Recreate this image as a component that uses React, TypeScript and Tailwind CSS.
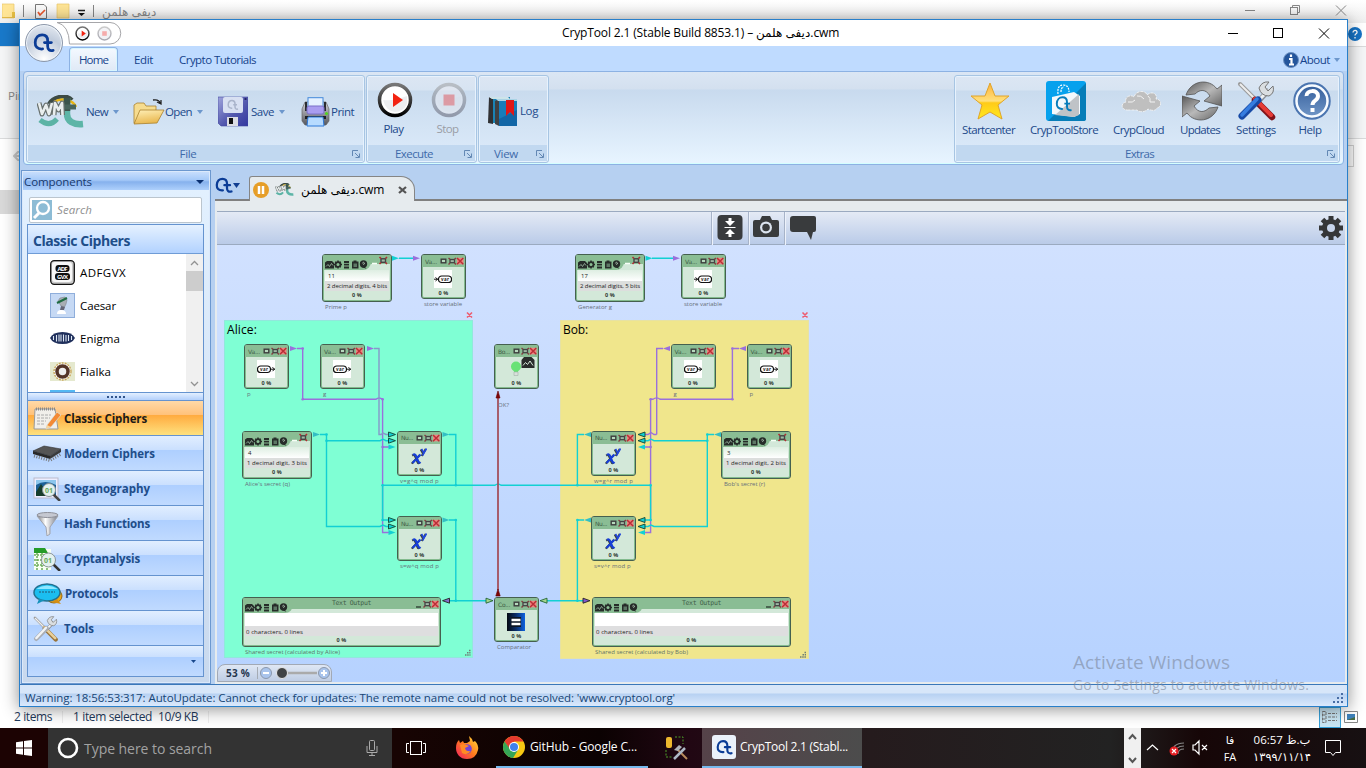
import React, { useLayoutEffect, useRef, useState } from "react";

/* Text that spreads or tightens its letters to fill a given width. */
function Fit({ w, className = "", children }: { w: number; className?: string; children: string }) {
  const ref = useRef<HTMLSpanElement>(null);
  const [ls, setLs] = useState(0);
  useLayoutEffect(() => {
    if (ref.current) {
      const r = document.createRange();
      r.selectNodeContents(ref.current);
      const natural = r.getBoundingClientRect().width;
      setLs((w - natural) / children.length);
    }
  }, []);
  return (
    <span ref={ref} className={`block shrink-0 whitespace-nowrap ${className}`} style={{ width: w, letterSpacing: ls }}>
      {children}
    </span>
  );
}

const CtPath = () => (
  <>
    <path d="M10.5 18.5C4.5 19 2.2 15.500 2.400 11.500C2.600 6 6 3 10 3C14 3 16 5.500 16 9.500V15.500C16 19 18 21 22 20" fill="none" />
    <path d="M12.500 11.500H20" fill="none" />
  </>
);
const Ct = ({ className = "size-6", color = "#0b3c96" }: { className?: string; color?: string }) => (
  <svg viewBox="0 0 24 24" className={className} stroke={color} strokeWidth="3" strokeLinecap="round"><CtPath /></svg>
);

const Caret = ({ className = "" }: { className?: string }) => (
  <svg viewBox="0 0 6 4" className={`h-1 w-1.5 shrink-0 ${className}`}><path d="M0 0h6l-3 4z" fill="#6d97cc" /></svg>
);

const WmLogo = ({ className }: { className: string }) => (
  <svg viewBox="0 0 47 33" className={className}>
    <path d="M12 9C16 1 30-1 35 5" stroke="#3c4a44" strokeWidth="4" fill="none" />
    <path d="M17 7C25 2 36 5 39 12" stroke="#e9b616" strokeWidth="2.500" fill="none" />
    <path d="M20 24C14 31 8 29 3 25" stroke="#5cb3a5" strokeWidth="5" fill="none" />
    <path d="M30 3V19C30 26 36 30 46 29" stroke="#5db5a7" strokeWidth="6.500" fill="none" />
    <path d="M30 3V16" stroke="#3b544c" strokeWidth="6.500" />
    <path d="M24 12H39" stroke="#48655d" strokeWidth="5" />
    <path d="M2 8L5 19L9 10L12 19L15 8M17 20L18 8L21.500 15L25 8L25.500 20" stroke="#69716f" strokeWidth="5" fill="none" strokeLinejoin="round" />
    <path d="M2 8L5 19L9 10L12 19L15 8M17 20L18 8L21.500 15L25 8L25.500 20" stroke="#e9eeee" strokeWidth="2.600" fill="none" strokeLinejoin="round" />
  </svg>
);

const FolderIcon = () => (
  <svg viewBox="0 0 32 28" className="h-7 w-8">
    <defs><linearGradient id="fo" x2="0.300" y2="1"><stop stopColor="#fff0b8" /><stop offset="1" stopColor="#e9b850" /></linearGradient></defs>
    <path d="M1 25V7L4 5H11L13 8H23V12L7 25Z" fill="#f6dc8f" stroke="#a9822e" strokeWidth=".8" />
    <path d="M7 12H31L24 25L1 26Z" fill="url(#fo)" stroke="#a9822e" strokeWidth=".8" />
    <path d="M20 2Q26 1 27 5M24 4L28 6L28 2" fill="none" stroke="#222" strokeWidth="1.300" />
  </svg>
);
const SaveIcon = () => (
  <svg viewBox="0 0 30 31" className="h-[31px] w-[30px]">
    <defs><linearGradient id="sv" x2="1" y2="1"><stop stopColor="#9fa4dc" /><stop offset=".55" stopColor="#5459ae" /><stop offset="1" stopColor="#3338a0" /></linearGradient></defs>
    <path d="M0 1H30V30H3L0 27Z" fill="url(#sv)" stroke="#4248a0" strokeWidth=".6" />
    <rect x="5" y="1" width="20" height="16" rx="2" fill="#d8e0f2" />
    <g transform="translate(9 3) scale(.5)" stroke="#aab4cb" strokeWidth="3"><CtPath /></g>
    <rect x="9" y="21" width="11" height="9" fill="#dcdde4" /><rect x="11" y="22" width="4" height="6" fill="#111" />
    <rect x="26.500" y="2" width="2" height="2" fill="#20246b" />
  </svg>
);
const PrintIcon = () => (
  <svg viewBox="0 0 29 30" className="h-[30px] w-[29px]">
    <defs><linearGradient id="pr" x2="0" y2="1"><stop stopColor="#d4d5da" /><stop offset="1" stopColor="#55565c" /></linearGradient></defs>
    <path d="M4 5H25L28 12V24L25 28H4L1 24V12Z" fill="url(#pr)" stroke="#666" strokeWidth=".7" />
    <path d="M5 5V14M24 5V14" stroke="#2b2c31" strokeWidth="2" />
    <rect x="7" y=".7" width="15" height="14" fill="#e4f1ff" stroke="#4388da" />
    <rect x="6" y="9" width="17" height="8" rx="2" fill="#a99df0" stroke="#7a70c8" />
    <rect x="4" y="19" width="21" height="3" fill="#1f2126" />
    <path d="M7 20H22L23 29H6Z" fill="#b7dbff" stroke="#2d78d8" />
    <circle cx="25.500" cy="16.500" r="1.500" fill="#51d51f" />
  </svg>
);
const RoundButton = ({ stop = false, small = false }: { stop?: boolean; small?: boolean }) => (
  <svg viewBox="0 0 36 36" className={small ? "size-[15px]" : "size-9"} opacity={stop ? 0.5 : 1}>
    <defs><linearGradient id={stop ? "rbs" : "rbp"} x2="0" y2="1"><stop stopColor={stop ? "#999" : "#777"} /><stop offset="1" stopColor={stop ? "#556" : "#000"} /></linearGradient></defs>
    <circle cx="18" cy="18" r="15.500" fill={stop ? "#e9e9ef" : "#fff"} stroke={stop ? "url(#rbs)" : "url(#rbp)"} strokeWidth="3.500" />
    <path d="M6 18Q18 19 30 14V22Q26 30 18 30Q9 29 6 18" fill="#e1e3e8" opacity=".6" />
    {stop ? <rect x="12.500" y="12.500" width="11" height="11" fill="#ec5a5a" /> : <path d="M16 11V25L26 18Z" fill="#f32311" />}
  </svg>
);
const BooksIcon = () => (
  <svg viewBox="0 0 30 32" className="h-8 w-[30px] shrink-0">
    <path d="M1 2L5 4V29L0 28Z" fill="#303134" /><path d="M5 3L22 2V28H5Z" fill="#1a83b4" />
    <path d="M1 2H20L22 4H4Z" fill="#cde4e9" />
    <path d="M7 6L11 4V31L7 29Z" fill="#3f4144" /><path d="M11 5H29V31H11Z" fill="#1266a6" /><path d="M11 5H29V15L11 24Z" fill="#1a8cc8" opacity=".6" />
    <path d="M8 4H29V6H10Z" fill="#a9d3e5" /><path d="M18 5H26V21L22 17L18 21Z" fill="#df1717" />
  </svg>
);
const StarIcon = () => (
  <svg viewBox="0 0 40 40" className="size-10">
    <defs><linearGradient id="st" x2="0" y2="1"><stop stopColor="#ffb338" /><stop offset=".5" stopColor="#ffe07b" /><stop offset=".55" stopColor="#ffcb18" /><stop offset="1" stopColor="#ffe91e" /></linearGradient></defs>
    <path d="M20 2L25 15H39L28 24L32 38L20 31L8 38L12 24L1 15H15Z" fill="url(#st)" stroke="#dfa52c" strokeLinejoin="round" />
  </svg>
);
const StoreIcon = () => (
  <svg viewBox="0 0 40 40" className="size-10">
    <rect width="40" height="40" rx="3" fill="#06a1ed" /><path d="M40 2V38Q40 40 37 40H2Z" fill="#067db8" />
    <path d="M6 16L28 11L34 15V33L28 36L6 33Z" fill="#f3f8fc" /><path d="M33 13V34L28 36L9 34Z" fill="#bfc3c7" />
    <path d="M12 13Q11 4 17 4Q23 4 23 11M15 11Q15 6 18 6" fill="none" stroke="#fff" strokeWidth="1.200" strokeDasharray="2 1" />
    <g transform="translate(9 14) scale(.75)" stroke="#087cba" strokeWidth="2.600"><CtPath /></g>
  </svg>
);
const CloudIcon = () => (
  <svg viewBox="0 0 40 40" className="size-10">
    <path d="M8 29C0 30-1 22 5 21C3 16 10 13 13 16C15 9 25 9 26 14C32 9 37 14 35 18C41 18 41 26 36 27C34 31 29 29 27 28C23 32 18 31 16 29Z" fill="#bfbfbf" stroke="#f7f7f7" strokeWidth=".8" strokeDasharray="3 1" />
    <path d="M7 21Q12 22 14 19M16 15Q20 14 23 18M27 15Q30 17 29 21H34" stroke="#f3f3f3" fill="none" />
  </svg>
);
const UpdateIcon = () => (
  <svg viewBox="0 0 40 40" className="size-10">
    <defs><linearGradient id="up" x2="1" y2="1"><stop stopColor="#585858" /><stop offset=".5" stopColor="#b9b9b9" /><stop offset="1" stopColor="#666" /></linearGradient></defs>
    <g fill="url(#up)" stroke="#545454" strokeWidth=".8">
      <path d="M4 14C9 -1 27-3 35 8L40 4V25L22 20L28 15C24 8 18 8 13 13Z" />
      <path d="M36 26C31 41 13 43 5 32L0 36V15L18 20L12 25C16 32 22 32 27 27Z" />
    </g>
  </svg>
);
const ToolsPic = ({ color = true, className = "size-10" }: { color?: boolean; className?: string }) => (
  <svg viewBox="0 0 40 40" className={className}>
    <path d="M3 3L16 16" stroke="#999" strokeWidth="4" strokeLinecap="round" /><path d="M3 3L18 18" stroke="#eee" strokeWidth="2" />
    <path d="M20 22L32 9" stroke="#8b8f95" strokeWidth="5" /><path d="M21 20L32 9" stroke="#eef1f3" strokeWidth="3" />
    <path d="M22 7Q25 0 32 1L28 6L31 10L36 5Q38 12 32 15Q24 15 22 7" fill="#dadee1" stroke="#777" />
    <path d="M18 19L35 36" stroke={color ? "#81131a" : "#98743b"} strokeWidth="6.500" strokeLinecap="round" />
    <path d="M18 18L34 34" stroke={color ? "#e63b36" : "#e9cf99"} strokeWidth="4" strokeLinecap="round" />
    <path d="M21 19L5 35" stroke={color ? "#174aa6" : "#a9adb4"} strokeWidth="7" strokeLinecap="round" />
    <path d="M20 18L5 34" stroke={color ? "#367de0" : "#f1f3f4"} strokeWidth="3.500" strokeLinecap="round" />
  </svg>
);
const HelpIcon = () => (
  <svg viewBox="0 0 40 40" className="size-10">
    <defs><linearGradient id="he" x2="0" y2="1"><stop stopColor="#315b99" /><stop offset="1" stopColor="#7399c9" /></linearGradient></defs>
    <circle cx="20" cy="20" r="17.500" fill="url(#he)" stroke="#4b75b0" strokeWidth="2.500" /><circle cx="20" cy="20" r="15.500" fill="none" stroke="#f7fbff" strokeWidth="2.500" />
    <path d="M14.500 15C14 9 26 8 26 15C26 20 20.500 19 20.500 24M20.500 27V31" stroke="#fff" strokeWidth="4" fill="none" />
  </svg>
);

function Group({ title, className, children }: { title: [string, number]; className: string; children: React.ReactNode }) {
  return (
    <section className={`flex h-[88px] shrink-0 flex-col overflow-hidden rounded-[3px] border border-[#a7c5e3] bg-gradient-to-b from-[#dbe6f4] from-15% to-[#d6e6f6] shadow-[inset_0_0_0_1px_#e7f2fd] ${className}`}>
      <div className="m-px mb-0 min-h-0 flex-1 bg-[linear-gradient(#dce6f3_0,#d7e4f2_13px,#c9dbee_14px,#d9e8f8_70px)]">{children}</div>
      <footer className="mx-px mb-px flex h-4 shrink-0 items-center bg-[#c1d8f0] pt-px">
        <div className="flex flex-1 justify-center pr-[4px] text-[#3e6aaa]"><Fit w={title[1]}>{title[0]}</Fit></div>
        <svg viewBox="0 0 8 8" className="mr-[3px] size-2 shrink-0" fill="none" stroke="#6388b4"><path d="M.5 6V.5H6M3 3L7 7M7.500 3.500V7.500H3.500" /></svg>
      </footer>
    </section>
  );
}

const Big = ({ icon, label, w, className = "", labelClass = "" }: { icon: React.ReactNode; label: string; w: number; className?: string; labelClass?: string }) => (
  <div className={`flex shrink-0 flex-col items-center ${className}`}>
    <div className="flex h-[44px] items-center">{icon}</div>
    <Fit w={w} className={`leading-4 ${labelClass}`}>{label}</Fit>
  </div>
);

/* ---------- sidebar pictures ---------- */
const navIcons: Record<string, React.ReactNode> = {
  classic: <svg viewBox="0 0 28 24" className="h-6 w-7"><path d="M2 2H22L25 22H1Z" fill="#f1efeb" stroke="#999" /><path d="M3 2H22" stroke="#8b8b8b" strokeWidth="3" strokeDasharray="1 1" /><path d="M4 8H18M4 11H17M4 14H13M4 17H12" stroke="#aaa" strokeDasharray="3 1" /><path d="M14 18L24 5L28 8L18 20L13 22Z" fill="#f38a36" stroke="#d7eef7" strokeWidth=".6" /><path d="M14 18L18 20L13 22Z" fill="#f5d5a0" /></svg>,
  modern: <svg viewBox="0 0 28 18" className="h-[18px] w-7"><path d="M0 6L11 1L28 4L17 11Z" fill="#555" stroke="#333" strokeWidth=".6" /><path d="M0 6L17 11V14L0 9Z" fill="#292929" /><path d="M17 11L28 4V7L17 14Z" fill="#3a3a3a" /><path d="M1 11L17 15.500L28 9" stroke="#777" strokeWidth="3" strokeDasharray="1 1.500" fill="none" /></svg>,
  steg: <svg viewBox="0 0 28 24" className="h-6 w-7"><rect x="1" y="1" width="24" height="20" fill="#eef" stroke="#bbc" /><rect x="3" y="3" width="20" height="16" fill="#1c6096" /><path d="M3 8Q12 2 23 8V3H3Z" fill="#8cc6ed" /><path d="M3 15L8 7L14 16V19H3Z" fill="#173d2c" /><path d="M20 17L27 24" stroke="#444" strokeWidth="2.500" /><circle cx="16" cy="13" r="6.500" fill="#e3f1ee" stroke="#8b9499" /><text x="12" y="16" className="text-[7px]" fill="#6aa95d">01</text></svg>,
  hash: <svg viewBox="0 0 28 24" className="h-6 w-7"><defs><linearGradient id="fu"><stop stopColor="#777" /><stop offset=".4" stopColor="#fff" /><stop offset="1" stopColor="#777b86" /></linearGradient></defs><path d="M4 4L13 15L14 24L17 22V15L25 4Z" fill="url(#fu)" stroke="#a0a3ad" /><ellipse cx="14.500" cy="3" rx="10.500" ry="2.500" fill="#c5c8d1" stroke="#8e9099" /></svg>,
  crypt: <svg viewBox="0 0 28 24" className="h-6 w-7"><path d="M1 2H18V23H1Z" fill="#f7fff2" /><path d="M1 8H17M1 13H17M1 18H17M4 6V23M9 6V23M14 6V23" stroke="#6cac59" strokeWidth="1.500" strokeDasharray="2 1" /><path d="M1 1H12L15 6H1Z" fill="#259c28" /><path d="M20 17L27 24" stroke="#333" strokeWidth="2.500" /><circle cx="15.500" cy="13" r="7" fill="#e3f1ee" stroke="#8b9499" /><text x="11" y="16" className="text-[7px]" fill="#6aa95d">01</text></svg>,
  proto: <svg viewBox="0 0 30 22" className="h-[22px] w-[30px]"><ellipse cx="21" cy="13" rx="8" ry="7" fill="#e9a51c" stroke="#9a6a0c" /><path d="M24 16L28 21L19 19Z" fill="#d58f12" /><ellipse cx="14" cy="9.500" rx="13" ry="8.500" fill="#1bbef0" stroke="#24708f" strokeWidth="1.500" /><path d="M6 16L4 21L12 17" fill="#1591ba" /><path d="M3 6Q14-1 25 6Z" fill="#8fe7ff" /><path d="M6 9H22" stroke="#23789a" strokeDasharray="2 1" strokeWidth="1.500" /></svg>,
  tools: <ToolsPic color={false} className="size-[26px]" />,
};
const nav: [string, string, number][] = [
  ["classic", "Classic Ciphers", 83], ["modern", "Modern Ciphers", 91], ["steg", "Steganography", 86], ["hash", "Hash Functions", 86],
  ["crypt", "Cryptanalysis", 76], ["proto", "Protocols", 53], ["tools", "Tools", 30],
];

const ciphers: [string, number, React.ReactNode][] = [
  ["ADFGVX", 46, <svg viewBox="0 0 25 25" className="size-[25px]"><rect x=".7" y=".7" width="23.600" height="23.600" rx="3.500" fill="#c9c9c9" stroke="#111" strokeWidth="1.300" /><rect x="2" y="2" width="20" height="20" rx="3" fill="#f8f8f8" /><rect x="5.500" y="5" width="14" height="7" rx="3" fill="#111" /><rect x="5" y="13" width="15" height="7" rx="3" fill="#111" /><text x="7.500" y="10.700" textLength="10" className="text-[6px] font-bold" fill="#fff">ADF</text><text x="7" y="18.700" textLength="11" className="text-[6px] font-bold" fill="#fff">GVX</text></svg>],
  ["Caesar", 36, <svg viewBox="0 0 25 25" className="size-[25px]"><rect x=".5" y=".5" width="24" height="24" fill="#c6d9f4" stroke="#8faedb" /><path d="M8 8L10 5L15 4L17 7L16 11L14.500 14L11 13Z" fill="#a9aeb4" stroke="#737980" strokeWidth=".5" /><path d="M7 10L17 5" stroke="#1f6b43" strokeWidth="2" /><path d="M11 13L15 14L14 17L10 17Z" fill="#667" /><path d="M7 21Q7 17 11 17Q16 17 16 21Z" fill="#fff" /></svg>],
  ["Enigma", 40, <svg viewBox="0 0 25 12" className="h-3 w-[25px]"><path d="M0 6Q3 0 12.500 0Q22 0 25 6Q22 12 12.500 12Q3 12 0 6Z" fill="#20305c" /><path d="M3.500 4V8M6.500 3V9.500M9 9.500V2.500M11 2.500V9.500M13.500 2.500V9.500M16 9.500V3M18.500 3V9M21.500 4V8" stroke="#dfeaf5" strokeWidth="1.100" fill="none" /></svg>],
  ["Fialka", 31, <svg viewBox="0 0 25 19" className="h-[19px] w-[25px]"><rect width="25" height="19" fill="#e5e9cf" /><circle cx="12.500" cy="9.500" r="8.500" fill="#fff" stroke="#c9a65a" strokeWidth="1.400" strokeDasharray="2 1" /><circle cx="12.500" cy="9.500" r="5.500" fill="#eee" stroke="#543427" strokeWidth="3.500" /></svg>],
];

/* ---------- workspace nodes ---------- */
const BoxIcons = ({ first }: { first: "box" | "min" }) => (
  <svg viewBox="0 0 24 8" className="h-2 w-6 shrink-0">
    {first === "box" ? <rect x="1.200" y="2.200" width="4.600" height="3.600" fill="#b6d9bd" stroke="#3c3c3c" strokeWidth="1.400" /> : <path d="M1 7H6" stroke="#35483a" strokeWidth="1.400" />}
    <rect x="10" y="2.500" width="4.500" height="3.200" fill="#9fb8a4" stroke="#444" strokeWidth="1.300" />
    <path d="M8.500 1L10 2.300M16 1L14.500 2.300M8.500 7.500L10 6M16 7.500L14.500 6" stroke="#843c40" strokeWidth="1.400" />
    <rect x="17" y=".8" width="6.500" height="6.500" fill="#f08380" /><path d="M17 1L23.300 7.200M23.300 1L17 7.200" stroke="#b92f37" strokeWidth="1.500" />
  </svg>
);
const ToolIcons = () => (
  <svg viewBox="0 0 44 9" className="h-[9px] w-11 shrink-0" fill="#262c29">
    <path d="M0 2.500L2 1H7L9 3V8.500H0Z" /><path d="M1 6.500L3 4.500L4.500 6.500L6.500 3.500L8 5.500" stroke="#b3d3ba" fill="none" strokeWidth=".7" />
    <path d="M13 .5V8.500M9 4.500H17M10.200 1.800L15.800 7.200M15.800 1.800L10.200 7.200" stroke="#262c29" strokeWidth="1.500" /><circle cx="13" cy="4.500" r="2.500" fill="none" stroke="#262c29" strokeWidth="1.700" /><circle cx="13" cy="4.500" r="1.500" fill="#8cc096" />
    <path d="M19 1H24V3H19ZM19 3.800H24V5.600H19ZM19 6.400H24V8.500H19Z" />
    <path d="M27 1.500H28.500V.5H31.500V1.500H33.500V8.500H27Z" /><path d="M28.500 3.500H32V7H28.500Z" fill="#5d7765" /><circle cx="38.500" cy="4" r="3.700" /><path d="M38 5L41.500 8.700L37 7.200Z" /><path d="M37.300 3.200Q38.500 1.500 39.500 3L38.500 4.800" stroke="#cfe6d3" fill="none" strokeWidth=".8" />
  </svg>
);
type Kind = "in" | "out" | "xy" | "lamp" | "eq";
const Pic = ({ kind }: { kind: Kind }) => {
  if (kind === "xy")
    return (
      <svg viewBox="0 0 18 18" className="size-[18px]">
        <path d="M3 8Q5 6.500 6 9L8.500 15Q9 16.500 10.500 15M10.500 7.500L2.500 16M11.500 2L13.500 5.500M16.500 1.500L12.500 8.500" transform="translate(-.8 .6)" stroke="#39423d" strokeWidth="2" fill="none" />
        <path d="M3 8Q5 6.500 6 9L8.500 15Q9 16.500 10.500 15M10.500 7.500L2.500 16" stroke="#173fd6" strokeWidth="2.200" fill="none" />
        <path d="M11.500 2L13.500 5.500M16.500 1.500L12.500 8.500" stroke="#2147de" strokeWidth="1.600" fill="none" />
      </svg>
    );
  if (kind === "eq")
    return (
      <svg viewBox="0 0 18 18" className="size-[18px]"><defs><linearGradient id="eq" x2="1" y2="0"><stop stopColor="#050a12" /><stop offset=".5" stopColor="#0a2d68" /><stop offset="1" stopColor="#0d62e0" /></linearGradient></defs><rect width="18" height="18" fill="url(#eq)" /><rect x="4" y="4" width="10" height="10" fill="#0a1424" /><path d="M4.500 7H13.500M4.500 11H13.500" stroke="#fff" strokeWidth="2.500" /></svg>
    );
  if (kind === "lamp")
    return (
      <svg viewBox="0 0 30 20" className="-mr-[12px] -mt-[3px] h-5 w-[30px]"><circle cx="9" cy="9.500" r="5" fill="#68e276" /><path d="M6 12L7.500 16H10.500L12 12Z" fill="#68e276" /><path d="M7 15H11V18.500H7Z" fill="#d9e0dc" stroke="#a4b4aa" strokeWidth=".6" /><path d="M14.500 3L17 0H24.500L27.500 3V11H14.500Z" fill="#292c2b" /><path d="M16 8.500L18.500 5.500L20.500 7.500L23 4L26 8.500" stroke="#d6e8da" fill="none" /></svg>
    );
  return (
    <svg viewBox="0 0 18 18" className="size-[18px]">
      <rect width="18" height="18" fill="#fff" />
      <rect x={kind === "in" ? 4.500 : 0.500} y="6" width="13" height="6.500" rx="3.200" fill="none" stroke="#111" strokeWidth="1.200" />
      <text x={kind === "in" ? 7 : 3} y="10.700" textLength="8" className="text-[4.500px] font-bold" fill="#222">var</text>
      {kind === "in" ? <path d="M0 9.200H4.500M1.500 7.500L3.500 9.200L1.500 11" stroke="#111" fill="none" /> : <path d="M13.500 9.200H18M15.500 7.200L17.500 9.200L15.500 11.200" stroke="#111" fill="none" />}
    </svg>
  );
};
const nodeShell = "absolute flex flex-col overflow-hidden rounded-[3px] border-[1.500px] border-[#45604f] bg-[#d3e8d9] shadow-[inset_0_0_0_1px_#83bb8e]";

const SmallNode = ({ x, y, name, kind, label, lw, lx = 3 }: { x: number; y: number; name: string; kind: Kind; label: string; lw: number; lx?: number }) => (
  <>
    <div className={`${nodeShell} h-[45px] w-[45px]`} style={{ left: x - 217, top: y - 245 }}>
      <div className="flex h-[12px] shrink-0 items-center bg-[#8abd94] pl-[3px]">
        <Fit w={12} className="font-['DejaVu_Sans'] text-[6px] text-[#3f5d48]">{name}</Fit>
        <div className="ml-auto flex pr-px"><BoxIcons first="box" /></div>
      </div>
      <div className="mt-[3px] flex justify-center pr-px"><Pic kind={kind} /></div>
      <div className="mt-auto text-center text-[5.500px] font-bold leading-[10px] tracking-wide text-[#303a34]">0 %</div>
    </div>
    <div className="absolute text-[6px] leading-[8px] text-[#666f7a]" style={{ left: x - 217 + lx, top: y - 245 + (kind === "lamp" ? 57 : 46) }}><Fit w={lw}>{label}</Fit></div>
  </>
);
const ValueNode = ({ x, y, value, info, iw, label, lw }: { x: number; y: number; value: string; info: string; iw: number; label: string; lw: number }) => (
  <>
    <div className={`${nodeShell} h-[48px] w-[70px]`} style={{ left: x - 217, top: y - 245 }}>
      <div className="flex h-[15px] shrink-0 bg-[linear-gradient(#8abd94_9px,transparent_9px)]">
        <div className="flex w-[48px] shrink-0 items-end rounded-br-lg bg-[#8abd94] pb-[1px] pl-[2px]"><ToolIcons /></div>
        <svg viewBox="0 0 18 9" className="mt-px h-[9px] w-[18px] shrink-0"><path d="M1 7.500H6" stroke="#f7fff7" strokeWidth="1.400" /><rect x="10" y="2.800" width="4.500" height="3.500" fill="#9fb8a4" stroke="#444" strokeWidth="1.400" /><path d="M8.500 1L10 2.500M16 1L14.500 2.500M8.500 8L10 6.500M16 8L14.500 6.500" stroke="#b02e35" strokeWidth="1.600" /></svg>
      </div>
      <div className="mx-[2px] h-[11px] bg-gradient-to-b from-[#deeee2] to-white pl-[3px] text-[6px] leading-[13px] text-[#222]">{value}</div>
      <div className="mx-[2px] h-[10px] bg-[#dcdedd] pl-[2px] text-[6px] leading-[11px] text-[#222]"><Fit w={iw}>{info}</Fit></div>
      <div className="text-center text-[5.500px] font-bold leading-[8px] tracking-wide text-[#303a34]">0 %</div>
    </div>
    <div className="absolute text-[6px] leading-[8px] text-[#666f7a]" style={{ left: x - 217 + 3, top: y - 245 + 49 }}><Fit w={lw}>{label}</Fit></div>
  </>
);
const OutputNode = ({ x, who, lw }: { x: number; who: string; lw: number }) => (
  <>
    <div className={`${nodeShell} h-[50px] w-[199px]`} style={{ left: x - 217, top: 352 }}>
      <div className="flex h-[15px] shrink-0 bg-[linear-gradient(#8abd94_11px,transparent_11px)]">
        <div className="flex w-[50px] shrink-0 items-end rounded-br-lg bg-[#8abd94] pb-[1px] pl-[2px]"><ToolIcons /></div>
        <Fit w={39} className="ml-[39px] mr-auto font-['DejaVu_Sans_Mono'] text-[6.500px] leading-[10px] text-[#3e5c47]">Text Output</Fit>
        <div className="pr-px pt-[1.500px]"><BoxIcons first="min" /></div>
      </div>
      <div className="mx-[2px] h-[13px] shrink-0 bg-white" />
      <div className="mx-[2px] h-[10px] bg-[#dededf] pl-[1px] text-[6px] leading-[12px] text-[#222]"><Fit w={57}>0 characters,  0 lines</Fit></div>
      <div className="text-center text-[5.500px] font-bold leading-[8px] tracking-wide text-[#303a34]">0 %</div>
    </div>
    <div className="absolute top-[403px] text-[6px] leading-[9px] text-[#5f7368]" style={{ left: x - 217 + 3 }}><Fit w={lw}>{`Shared secret (calculated by ${who})`}</Fit></div>
  </>
);

const C = "#12d0d3", P = "#9a70dc";
const tri = (x: number, y: number, dir: 1 | -1, fill: string, outline = "none") => (
  <path key={`${x}-${y}`} d={dir === 1 ? `M${x} ${y - 2.500}L${x + 7} ${y}L${x} ${y + 2.500}Z` : `M${x + 7} ${y - 2.500}L${x} ${y}L${x + 7} ${y + 2.500}Z`} fill={fill} stroke={outline} strokeWidth=".9" />
);
const dots: [number, number, string][] = [
  [302.700, 348.500, P], [302.700, 399.300, P], [382.600, 399.300, P], [382.600, 447, P], [326.500, 434.500, C], [326.500, 440.700, C], [382.600, 485.300, C], [455.800, 485.300, C], [382.600, 520, C],
  [455.800, 520, C], [455.800, 600.700, C], [577.400, 600.700, C], [577.400, 520, C], [577.400, 485.300, C], [650.600, 485.300, C], [650.600, 520, C], [650.600, 447, P], [650.600, 399.300, P], [732.400, 399.300, P], [732.400, 348.500, P], [707.300, 434.500, C], [707.300, 440.700, C],
];
const Wires = () => (
  <svg viewBox="217 245 1128 437" className="absolute inset-0 h-[437px] w-[1128px]" fill="none" strokeWidth="1.400">
    <g stroke={P}>
      <path d="M297 348.500H302.700V399.300H376Q379 396.500 382.600 399.300V532.500H389M382.600 447H389" />
      <path d="M650.600 399.300V532.500H645M650.600 447H645M650.600 399.300H653Q656.700 396.500 660 399.300H732.400V348.500H739" />
      <path d="M656.700 434.500V348.500H663M656.700 434.500H654L651 432.500L648 434.500H645" />
      <path d="M374 348.500H379V434.500H381L383 433L386 434.500H389" stroke="#8798c9" />
    </g>
    <g stroke={C}>
      <path d="M399 258.300H413M652 258.300H673" />
      <path d="M320 434.500H326.500V526.500H380L383 525L386 526.500H389M326.500 440.700H380L383 439.200L386 440.700H389" />
      <path d="M449 434.500H455.800V485.300M449 520H455.800V600.700M449 600.700H486M547 600.700H583M584 520H577.400V600.700M584 434.500H577.400V485.300" />
      <path d="M389 520H382.600V485.300H495Q498 483 501 485.300H650.600V520H645" />
      <path d="M714 434.500H707.300V526.500H654L651 525L648 526.500H645M707.300 440.700H654L651 439.200L648 440.700H645" />
    </g>
    <path d="M498 397V590" stroke="#a4505c" strokeWidth="1.800" />
    <path d="M496 398L498 391L500 398ZM495.800 596L498 589L500.200 596Z" fill="#7f0606" stroke="#640000" strokeWidth=".6" />
    {dots.map(([x, y, c]) => <circle key={`${x}-${y}`} cx={x} cy={y} r="1.300" fill={c} />)}
    {[tri(392, 258.300, 1, C), tri(413, 258.300, 1, P), tri(645.500, 258.300, 1, C), tri(673, 258.300, 1, P), tri(290, 348.500, 1, P), tri(367, 348.500, 1, P), tri(663, 348.500, -1, P), tri(739, 348.500, -1, P),
      tri(313, 434.500, 1, "#33bfc4"), tri(442.500, 434.500, 1, "#33bfc4"), tri(442.500, 520, 1, "#33bfc4"), tri(584, 434.500, -1, "#33bfc4"), tri(584, 520, -1, "#33bfc4"), tri(714, 434.500, -1, "#33bfc4"),
      tri(388.500, 434.500, 1, C, "#143"), tri(388.500, 440.700, 1, C, "#143"), tri(388.500, 447, 1, C), tri(388.500, 520, 1, C, "#143"), tri(388.500, 526.500, 1, C, "#143"), tri(388.500, 532.500, 1, C),
      tri(638, 434.500, -1, C, "#143"), tri(638, 440.700, -1, C, "#143"), tri(638, 447, -1, C), tri(638, 520, -1, C, "#143"), tri(638, 526.500, -1, C, "#143"), tri(638, 532.500, -1, C),
      tri(442.500, 600.700, -1, "#8470cc", "#222"), tri(486, 600.700, 1, "#a5d790", "#263"), tri(540, 600.700, -1, "#a5d790", "#263"), tri(583, 600.700, 1, "#8458d0", "#222")]}
    <path d="M467 312.500L472 317.500M472 312.500L467 317.500M802.500 312.500L807.500 317.500M807.500 312.500L802.500 317.500" stroke="#ed5c70" strokeWidth="1.600" />
    <path d="M465 655H470.500M467 652.800H470.500M469 650.500H470.500M800 657H806M802.500 654.800H806M804.500 652.500H806" stroke="#6e7e77" strokeWidth="1.500" strokeDasharray="1.500 .7" />
  </svg>
);

const Workspace = () => (
  <div className="relative min-h-0 flex-1 overflow-hidden bg-gradient-to-b from-[#d1e1ff] to-[#b6d2ff]">
    <div className="absolute left-[7px] top-[75px] h-[338px] w-[249px] border border-[#91e8dc] bg-[#7fffd4] pl-[2px] pt-px text-[12px] leading-4 text-black"><Fit w={30}>Alice:</Fit></div>
    <div className="absolute left-[343px] top-[75px] h-[339px] w-[249px] border border-[#e7e2a3] bg-[#f0e68c] pl-[2px] pt-px text-[12px] leading-4 text-black"><Fit w={25}>Bob:</Fit></div>
    <Wires />
    <ValueNode x={322} y={254} value="11" info="2 decimal digits, 4 bits" iw={60} label="Prime p" lw={22} />
    <SmallNode x={421} y={254} name="Va..." kind="in" label="store variable" lw={38} />
    <ValueNode x={575} y={254} value="17" info="2 decimal digits, 5 bits" iw={60} label="Generator g" lw={34} />
    <SmallNode x={681} y={254} name="Va..." kind="in" label="store variable" lw={38} />
    <SmallNode x={244} y={344} name="Va..." kind="out" label="p" lw={4} />
    <SmallNode x={320} y={344} name="Va..." kind="out" label="g" lw={4} />
    <SmallNode x={494} y={344} name="Bo..." kind="lamp" label="OK?" lw={11} lx={4} />
    <SmallNode x={670.500} y={344} name="Va..." kind="out" label="g" lw={4} />
    <SmallNode x={746.500} y={344} name="Va..." kind="out" label="p" lw={4} />
    <ValueNode x={242} y={430.500} value="4" info="1 decimal digit, 3 bits" iw={60} label="Alice's secret (q)" lw={45} />
    <SmallNode x={397} y={430.500} name="Nu..." kind="xy" label="v=g^q mod p" lw={39} />
    <SmallNode x={397} y={516} name="Nu..." kind="xy" label="s=w^q mod p" lw={39} />
    <SmallNode x={591} y={430.500} name="Nu..." kind="xy" label="w=g^r mod p" lw={39} />
    <SmallNode x={591} y={516} name="Nu..." kind="xy" label="s=v^r mod p" lw={37} />
    <ValueNode x={721} y={430.500} value="3" info="1 decimal digit, 2 bits" iw={60} label="Bob's secret (r)" lw={41} />
    <OutputNode x={242} who="Alice" lw={95} />
    <SmallNode x={494} y={597} name="Co..." kind="eq" label="Comparator" lw={34} />
    <OutputNode x={592} who="Bob" lw={93} />
    <div className="absolute bottom-0 left-0 flex h-[18px] w-[115px] items-center rounded-t-lg border border-[#a2a9b5] bg-gradient-to-b from-[#dfe7f4] to-[#bfcde4] pl-2 text-[10px] font-bold text-[#26364f]">
      <Fit w={24}>53 %</Fit>
      <svg viewBox="0 0 76 16" className="ml-[7px] h-4 w-[76px] shrink-0">
        <path d="M.5 2V14" stroke="#a5abb4" /><path d="M22 8H60" stroke="#aaa" strokeWidth="2.500" />
        <circle cx="9" cy="8" r="5.500" fill="#a9c4ec" stroke="#8b98ad" /><path d="M6 8H12" stroke="#fff" strokeWidth="2" />
        <circle cx="67" cy="8" r="5.500" fill="#a9c4ec" stroke="#8b98ad" /><path d="M64 8H70M67 5V11" stroke="#fff" strokeWidth="2" />
        <circle cx="25" cy="8" r="5.500" fill="#414345" stroke="#e5e5e5" />
      </svg>
    </div>
  </div>
);

const Sidebar = () => (
  <aside className="flex h-[514px] w-[190px] shrink-0 flex-col border border-[#6c98cf] bg-gradient-to-b from-[#e3f1ff] to-[#c9d9ee] shadow-[inset_0_0_0_1px_#dbe9fb]">
    <div className="m-px flex h-[18px] shrink-0 items-center justify-between bg-[linear-gradient(#c7defd,#a5c9f8_45%,#86b1ed_55%,#aed0fc)] pl-px pr-[5px] pt-px text-[#17396d]">
      <Fit w={68}>Components</Fit>
      <svg viewBox="0 0 8 4" className="h-1 w-2"><path d="M0 0H8L4 4Z" fill="#0a2f70" /></svg>
    </div>
    <div className="ml-[7px] mt-[6px] flex h-[26px] w-[173px] shrink-0 items-center gap-[5px] rounded-[2px] border border-[#bbc5ce] bg-white pl-[2px] text-[#909090]">
      <svg viewBox="0 0 20 20" className="size-5 bg-[#8dbcd5]"><circle cx="11" cy="8" r="6" fill="none" stroke="#fff" strokeWidth="2.300" /><path d="M7 13L2 18" stroke="#fff" strokeWidth="3" /></svg>
      <Fit w={35} className="italic">Search</Fit>
    </div>
    <div className="ml-[5px] mt-[1px] flex h-[453px] w-[177px] shrink-0 flex-col border border-[#6593cf]">
      <h2 className="flex h-[29px] shrink-0 items-center border-b border-[#6f9cd6] bg-gradient-to-b from-[#e5f1ff] to-[#b2d2ff] pl-[5px] pt-[3px] text-[14px] font-bold text-[#204d89]"><Fit w={97}>Classic Ciphers</Fit></h2>
      <div className="flex h-[138px] shrink-0 bg-white">
        <div className="flex-1 overflow-hidden pl-[22px] pt-px">
          {ciphers.map(([n, w, icon]) => (
            <div key={n} className="flex h-[33px] items-center gap-[5px] pt-px font-medium text-black">{icon}<Fit w={w} className="pt-px">{n}</Fit></div>
          ))}
          <div className="mt-[3px] h-3 w-[25px] bg-[#53b8f3]" />
        </div>
        <div className="flex w-[17px] flex-col items-center bg-[#f0f0f0]">
          <svg viewBox="0 0 9 17" className="h-[17px] w-[9px]" fill="none" stroke="#929292" strokeWidth="1.300"><path d="M1 11L4.500 7.500L8 11" /></svg>
          <div className="h-[20px] w-full bg-[#cdcdcd]" />
          <svg viewBox="0 0 9 17" className="mt-auto h-[17px] w-[9px]" fill="none" stroke="#929292" strokeWidth="1.300"><path d="M1 7L4.500 10.500L8 7" /></svg>
        </div>
      </div>
      <div className="flex h-[8px] shrink-0 items-center justify-center border-t border-[#6593cf] bg-gradient-to-b from-[#e3efff] to-[#b3d0fb]">
        <svg viewBox="0 0 18 2" className="h-[2px] w-[18px]" fill="#31548b"><path d="M0 0h2v2H0zM4 0h2v2H4zM8 0h2v2H8zM12 0h2v2h-2zM16 0h2v2h-2z" /></svg>
      </div>
      {nav.map(([id, label, w], i) => (
        <div key={id} className={`flex h-[35px] shrink-0 items-center border-t border-[#6593cf] pl-[5px] text-[11.500px] font-bold ${i === 0 ? "bg-[linear-gradient(#ffd9a7,#ffc27b_40%,#ffab3f_42%,#fee17e)] text-[#1c1a18]" : "bg-[linear-gradient(#e1eeff,#cbe0fe_40%,#aecfff_42%,#c0daff)] text-[#204d89]"}`}>
          <div className={`flex shrink-0 items-center pt-px ${id === "proto" ? "w-[32px]" : "w-[31px]"}`}>{navIcons[id]}</div><Fit w={w} className="pt-[2px]">{label}</Fit>
        </div>
      ))}
      <div className="flex min-h-0 flex-1 items-center justify-end border-t border-[#6593cf] bg-[linear-gradient(#e1eeff,#cbe0fe_35%,#aecfff_38%,#c0daff)] pr-[7px]"><svg viewBox="0 0 5 3" className="h-[3px] w-[5px]"><path d="M0 0H5L2.500 3Z" fill="#17478c" /></svg></div>
    </div>
  </aside>
);

const Ribbon = () => (
  <div className="mx-[3px] flex h-[94px] shrink-0 rounded-[4px] border border-[#8db2e3] bg-[linear-gradient(#dbe6f4_0,#d3e0ef_17px,#c8daee_18px,#e7f4ff_90px)] px-[2px] pt-[3px] text-[#21498a] shadow-[inset_0_-1px_0_#d4ffff]">
    <Group title={["File", 17]} className="w-[339px]">
      <div className="flex h-full items-center pl-[9px] pt-px">
        <WmLogo className="h-[33px] w-[47px] shrink-0" /><Fit w={22} className="ml-[2px]">New</Fit><Caret className="ml-[5px]" />
        <div className="ml-[14px]"><FolderIcon /></div><Fit w={27}>Open</Fit><Caret className="ml-[5px]" />
        <div className="ml-[15px]"><SaveIcon /></div><Fit w={23} className="ml-[3px]">Save</Fit><Caret className="ml-[5px]" />
        <div className="ml-[16px]"><PrintIcon /></div><Fit w={23} className="ml-px">Print</Fit>
      </div>
    </Group>
    <Group title={["Execute", 38]} className="ml-px w-[111px]">
      <div className="flex pt-px">
        <Big className="ml-[9px] w-9" icon={<RoundButton />} label="Play" w={20} labelClass="-ml-[3px] -mt-px" />
        <Big className="ml-[18px] w-9 text-[#9a9da5]" icon={<RoundButton stop />} label="Stop" w={22} labelClass="-ml-[3px] -mt-px" />
      </div>
    </Group>
    <Group title={["View", 24]} className="ml-px w-[71px]">
      <div className="flex h-full items-center pl-[8px]"><BooksIcon /><Fit w={18} className="ml-[2px]">Log</Fit></div>
    </Group>
    <Group title={["Extras", 29]} className="ml-auto mr-px w-[386px]">
      <div className="flex pt-[2px]">
        <Big className="ml-[6px]" icon={<div className="-mr-px ml-px"><StarIcon /></div>} label="Startcenter" w={53} labelClass="-mt-px" />
        <Big className="ml-[15px]" icon={<div className="-mr-[2px] ml-[2px]"><StoreIcon /></div>} label="CrypToolStore" w={68} labelClass="-mt-px" />
        <Big className="ml-[15px]" icon={<div className="-mr-[2px] ml-[2px]"><CloudIcon /></div>} label="CrypCloud" w={51} labelClass="-mt-px" />
        <Big className="ml-[16px]" icon={<div className="-mr-[2px] ml-[2px]"><UpdateIcon /></div>} label="Updates" w={40} labelClass="-mt-px" />
        <Big className="ml-[16px]" icon={<div className="-mr-px ml-px"><ToolsPic /></div>} label="Settings" w={40} labelClass="-mt-px" />
        <Big className="ml-[14px]" icon={<div className="-mr-[2px] ml-[2px]"><HelpIcon /></div>} label="Help" w={23} labelClass="-mt-px" />
      </div>
    </Group>
  </div>
);

const CrypTool = () => (
  <div className="absolute left-[19px] top-[19px] flex h-[688px] w-[1329px] flex-col border border-[#287fca] bg-[#b6d0f1] shadow-[0_2px_16px_rgba(0,0,0,.45)]">
    <div className="absolute left-[5px] top-[4px] z-10 flex size-[38px] items-center justify-center rounded-full border border-[#8c97a9] bg-[radial-gradient(circle_at_50%_95%,#fff,#c1ccdc_55%,#eef2f7)] shadow-[inset_0_0_0_1px_#eef4fa]"><Ct className="h-[22px] w-[24px]" /></div>
    <header className="flex h-[26px] shrink-0 items-start bg-white">
      <svg viewBox="0 0 66 24" className="ml-[37px] mt-px h-6 w-[66px] shrink-0" fill="none" stroke="#a6a6a9"><path d="M0 1.500Q12 4 12.500 23H53A10.700 10.700 0 0 0 53 1.500Z" /></svg>
      <div className="-ml-[48px] mt-[6px] flex w-[48px] shrink-0 gap-[7px]"><RoundButton small /><RoundButton small stop /></div>
      <div className="ml-[439px] w-[280px] whitespace-nowrap text-[12px] font-medium leading-[26px] tracking-[-0.140px] text-black">CrypTool 2.1 (Stable Build 8853.1) – <bdi dir="rtl">دیفی هلمن</bdi>.cwm</div>
      <svg viewBox="0 0 102 11" className="ml-auto mr-[17px] mt-[8px] h-[11px] w-[102px]" fill="none" stroke="#000"><path d="M0 5.500H10M91 .5L101 10.500M101 .5L91 10.500" /><rect x="45.500" y=".5" width="9" height="9" /></svg>
    </header>
    <nav className="flex h-[25px] shrink-0 items-end bg-[#bfdbff] text-[#15428b]">
      <div className="ml-[49px] flex h-[24px] w-[49px] items-center justify-center rounded-t-[4px] border border-b-0 border-[#8db2e3] bg-gradient-to-b from-[#f4f9ff] to-[#dfe9f6] pt-px shadow-[inset_0_0_0_1px_#d7f6ff]"><Fit w={29}>Home</Fit></div>
      <Fit w={19} className="ml-[16px] leading-[23px]">Edit</Fit><Fit w={77} className="ml-[26px] leading-[23px]">Crypto Tutorials</Fit>
      <div className="ml-auto flex h-[24px] items-center pr-[7px] pt-px"><svg viewBox="0 0 16 16" className="mr-[1px] size-4"><circle cx="8" cy="8" r="7.500" fill="#24559c" stroke="#6c8fc0" /><path d="M8 2.500V5M6 7H8.500V12.500M6 12.500H11" stroke="#fff" strokeWidth="2.200" fill="none" /></svg><Fit w={30}>About</Fit><Caret className="ml-[4px]" /></div>
    </nav>
    <Ribbon />
    <div className="flex min-h-0 flex-1 pl-px pt-[5px]">
      <Sidebar />
      <main className="ml-[4px] flex min-w-0 flex-1 flex-col">
        <div className="flex h-[31px] shrink-0 items-end border-b-2 border-[#808080]">
          <Ct className="mb-[4px] h-[19px] w-[18px]" /><svg viewBox="0 0 7 5" className="mb-[11px] h-[5px] w-[7px]"><path d="M0 0H7L3.500 5Z" fill="#123e91" /></svg>
          <div className="-mb-[2px] ml-[9px] flex h-[25px] w-[166px] items-center rounded-tl-[3px] rounded-tr-[14px] border border-b-0 border-[#858585] bg-[#e6ebee] pl-[3px] pt-px">
            <svg viewBox="0 0 16 16" className="size-4"><circle cx="8" cy="8" r="8" fill="#e69e28" /><path d="M6 4V12M10 4V12" stroke="#fff" strokeWidth="2.500" /></svg>
            <WmLogo className="ml-[6px] h-[13px] w-[19px]" />
            <span className="ml-[7px] w-[84px] whitespace-nowrap text-[12px] tracking-[-0.100px] text-black"><bdi dir="rtl">دیفی هلمن</bdi>.cwm</span>
            <svg viewBox="0 0 9 8" className="ml-[13px] h-2 w-[9px]"><path d="M1 1L8 7M8 1L1 7" stroke="#555" strokeWidth="2.300" /></svg>
          </div>
        </div>
        <div className="flex min-h-0 flex-1 flex-col border-x-2 border-b-2 border-t-[10px] border-[#e6ebee]">
          <div className="flex h-[34px] shrink-0 items-center border-y border-[#9baac0] bg-gradient-to-b from-[#e4eaf5] to-[#bacbe8]">
            <svg viewBox="0 0 122 33" className="ml-[494px] h-[33px] w-[122px] shrink-0">
              <path d="M.5 0V33M37.500 0V33M73.500 0V33" stroke="#a7b3c8" /><path d="M1.500 0V33M38.500 0V33M74.500 0V33" stroke="#edf2fb" />
              <rect x="6.500" y="3" width="25" height="25" rx="4" fill="#393b3d" /><path d="M17.500 6H20.500V9H24L19 14L14 9H17.500ZM17.500 25H20.500V22H24L19 17L14 22H17.500Z" fill="#fff" /><path d="M13.500 15.500H24.500" stroke="#fff" />
              <path d="M43 8H49L51 4H59L61 8H66Q68 8 68 10V23Q68 25 66 25H44Q42 25 42 23V10Q42 8 44 8Z" fill="#393b3d" /><circle cx="55" cy="15.500" r="6" fill="#dce4f0" /><circle cx="55" cy="15.500" r="3.800" fill="#393b3d" />
              <path d="M82 4H103Q105 4 105 6V18Q105 20 103 20H102L100 28L96 20H82Q79 20 79 17V7Q79 4 82 4Z" fill="#393b3d" />
            </svg>
            <svg viewBox="0 0 24 24" className="-mt-px ml-auto mr-[2px] size-6"><path d="M12 0V24M0 12H24M3.500 3.500L20.500 20.500M20.500 3.500L3.500 20.500" stroke="#353638" strokeWidth="5" /><circle cx="12" cy="12" r="6.500" fill="none" stroke="#353638" strokeWidth="5" /><circle cx="12" cy="12" r="4" fill="#c7d4eb" /></svg>
          </div>
          <Workspace />
        </div>
      </main>
    </div>
    <footer className="flex h-[22px] shrink-0 items-center justify-between border-t border-[#3977b9] bg-[linear-gradient(#d7e6f9_8px,#b7d1f2_9px,#dbe9fc)] pl-[5px] pt-[4px] text-[11.500px] text-[#164575]">
      <Fit w={650}>Warning: 18:56:53:317: AutoUpdate: Cannot check for updates: The remote name could not be resolved: 'www.cryptool.org'</Fit>
      <svg viewBox="0 0 12 12" className="mr-[3px] size-3"><path d="M1 10H12M5 6H12M9 2H12" stroke="#486da4" strokeWidth="2" strokeDasharray="2 2" /></svg>
    </footer>
  </div>
);

const Explorer = () => (
  <div className="flex h-[728px] flex-col bg-white text-[#8a8a8a]">
    <div className="flex h-[23px] shrink-0 items-start bg-gradient-to-b from-white to-[#eee] pl-[2px]">
      <svg viewBox="0 0 94 19" className="h-[19px] w-[94px]">
        <path d="M0 4H12V18H0Z" fill="#ffe596" stroke="#e8c66a" strokeWidth=".7" /><path d="M10 12H13V18H10Z" fill="#e4bd44" /><path d="M0 17.500H13" stroke="#e1b848" /><path d="M21.500 5V17M91.500 5V17" stroke="#858585" />
        <path d="M33.500 4.500H42L44.500 7V18.500H33.500Z" fill="#fafafa" stroke="#777" /><path d="M36 12L38 15L43 10" stroke="#ec572c" strokeWidth="1.700" fill="none" />
        <path d="M55 4H67V18H55Z" fill="#ffe596" stroke="#e8c66a" strokeWidth=".7" /><path d="M76 10.500H83" stroke="#222" strokeWidth="1.500" /><path d="M76 13H83L79.500 16Z" fill="#111" />
      </svg>
      <span dir="rtl" className="ml-[6px] text-[12px] leading-[24px]">دیفی هلمن</span>
      <svg viewBox="0 0 102 12" className="ml-auto mr-[19px] mt-[5px] h-3 w-[102px]" fill="none" stroke="#878787"><path d="M0 5.500H10M91 .5L101 10.500M101 .5L91 10.500" /><rect x="45.500" y="2.500" width="7" height="7" /><path d="M47.500 2V.5H54.500V7.500H53" /></svg>
    </div>
    <div className="flex h-[23px] shrink-0 justify-between"><div className="w-[600px] bg-[#1979ca]" /><svg viewBox="0 0 14 14" className="mr-[4px] mt-[4px] size-[14px]"><circle cx="7" cy="7" r="7" fill="#1673c5" /><path d="M5 5.500C5 2.500 9.500 3 9 5.500C9 7 7 6.500 7 8.500M7 10V11.500" stroke="#fff" fill="none" strokeWidth="1.300" /></svg></div>
    <div className="h-[93px] shrink-0 border-y border-[#dadbdc] bg-[#f5f6f7] pl-[8px] pt-[40px]">Pin</div>
    <div className="flex h-[51px] shrink-0 justify-between pl-[13px] pt-[6px]"><svg viewBox="0 0 10 10" className="mt-[6px] size-[10px]"><path d="M6 0L1 5L6 10M1 5H10" fill="none" stroke="#ccc" strokeWidth="2" /></svg><div className="mr-[12px] h-[22px] w-10 border border-[#d3d3d3]" /></div>
    <div className="h-[24px] w-[200px] shrink-0 bg-[#d9d9d9]" />
    <div className="mt-auto flex h-[22px] items-center pl-[14px] text-[12px] text-[#1e395b]">
      <Fit w={38}>2 items</Fit><div className="ml-[10px] h-3 border-l border-[#eee]" /><Fit w={79} className="ml-[10px]">1 item selected</Fit><Fit w={40} className="ml-[6px]">10/9 KB</Fit><div className="ml-[10px] h-3 border-l border-[#eee]" />
      <div className="ml-auto flex h-[21px] w-[22px] items-center justify-center border border-[#36a0d8] bg-[#c9e6f4]"><svg viewBox="0 0 16 12" className="h-3 w-4"><path d="M.5 .5H4V11.500H.5ZM.5 4H4M.5 8H4M6 2.500H15M6 6H15M6 9.500H15" stroke="#777" fill="none" strokeDasharray="3 1" /></svg></div>
      <svg viewBox="0 0 14 12" className="ml-[3px] mr-[8px] h-3 w-[14px]"><path d="M.5 .5H13.500V11.500H.5Z" fill="#fff" stroke="#888" /><path d="M3 3H11V9H3Z" fill="#3e82bc" /><path d="M3 9L11 6V9Z" fill="#496c42" /></svg>
    </div>
  </div>
);

const Taskbar = () => (
  <div className="flex h-[40px] bg-[linear-gradient(90deg,#180202_48px,#170403_400px,#0b0202_600px,#210713_690px,#251b1d_870px,#222_1110px,#160607_1200px,#171012)] text-white">
    <div className="flex w-[48px] items-center justify-center bg-[#1c0303]"><svg viewBox="0 0 16 16" className="size-4" fill="#fff"><path d="M0 2.300L7 1.300V7.500H0ZM8 1.100L16 0V7.500H8ZM0 8.500H7V14.700L0 13.700ZM8 8.500H16V16L8 14.900Z" /></svg></div>
    <div className="flex w-[344px] items-center bg-[#333] pl-[9px] text-[14px] text-[#a2a2a2]">
      <svg viewBox="0 0 22 22" className="size-[22px]"><circle cx="11" cy="11" r="9" fill="none" stroke="#fff" strokeWidth="2.600" /></svg><Fit w={128} className="ml-[5px]">Type here to search</Fit>
      <svg viewBox="0 0 12 16" className="ml-auto mr-[14px] h-4 w-3" fill="none" stroke="#aaa"><rect x="3.500" y=".5" width="5" height="10" rx="1" /><path d="M1 6V12.500H11V6M6 12.500V15.500M3 15.500H9" /></svg>
    </div>
    <svg viewBox="0 0 20 14" className="ml-[14px] h-[14px] w-5 self-center" fill="none" stroke="#fff"><rect x="4.500" y=".5" width="11" height="13" /><path d="M3 2.500H.5V11.500H3M17 2.500H19.500V11.500H17" /></svg>
    <svg viewBox="0 0 24 24" className="ml-[29px] size-6 self-center"><defs><linearGradient id="ff" x1="1" x2="0" y2="1"><stop stopColor="#ffe13b" /><stop offset=".5" stopColor="#ff7a1e" /><stop offset="1" stopColor="#f21b63" /></linearGradient></defs><path d="M12 23C5 23 1 18 1 12C1 8 2 6 4 4L5 7L8 5L9 7H12L15 5L14 0Q17 2 18 6L20 5Q24 9 23 14Q21 23 12 23" fill="url(#ff)" /><circle cx="12" cy="13" r="4.800" fill="#7144d5" /><path d="M5 9Q9 7 14 10L10 12Q11 16 16 15Q12 20 7 17" fill="#ff8b24" /></svg>
    <div className="ml-[17px] flex w-[152px] items-center border-b-2 border-[#76b9ed] pl-[7px] text-[12px]">
      <svg viewBox="0 0 22 22" className="size-[22px]"><circle cx="11" cy="11" r="11" fill="#f7c813" /><path d="M1.500 5.500A11 11 0 0 1 20.500 5.500H11L7 14Z" fill="#e5392e" /><path d="M1.500 5.500A11 11 0 0 0 10 22L15 14L7 13Z" fill="#35a657" /><circle cx="11" cy="11" r="5" fill="#fff" /><circle cx="11" cy="11" r="4" fill="#3f80ed" /></svg><Fit w={107} className="ml-[5px]">GitHub - Google C...</Fit>
    </div>
    <svg viewBox="0 0 24 24" className="ml-[17px] size-6 self-center"><rect x="1" y="1" width="6" height="11" rx="2" fill="#edb72e" /><path d="M10 1H18V8M1 14V21H8" stroke="#4d9d28" strokeDasharray="2 1.500" fill="none" /><path d="M12 13L22 23" stroke="#b88a5b" strokeWidth="2" /><path d="M20 12L9 23" stroke="#aeb9c5" strokeWidth="2.500" /><path d="M9 14L14 9L17 11L13 15Z" fill="#adb3ba" /></svg>
    <div className="ml-[13px] flex w-[160px] items-center border-b-2 border-[#76b9ed] bg-gradient-to-r from-[#554249] to-[#4c4c4c] pl-[10px] text-[12px]"><div className="flex size-6 items-center justify-center rounded-[3px] bg-[#eaf1fa]"><Ct className="size-[17px]" /></div><Fit w={108} className="ml-[4px]">CrypTool 2.1 (Stabl...</Fit></div>
    <svg viewBox="0 0 17 40" className="ml-auto h-10 w-[17px] bg-[#f0f0f0]" fill="none" stroke="#555" strokeWidth="2"><path d="M5 11L8.500 7L12 11M5 30L8.500 34L12 30" /></svg>
    <svg viewBox="0 0 66 20" className="ml-[5px] mt-[9px] h-5 w-[66px]" fill="none" stroke="#fff" strokeWidth="1.200">
      <path d="M1 13L6.500 8L12 13" /><path d="M26 17Q26 6 38 6M29 17Q29 9 38 9M32 17Q32 12 38 12" stroke="#878787" /><circle cx="28" cy="14" r="4.500" fill="#e51f24" stroke="none" /><path d="M26 12L30 16M30 12L26 16" /><path d="M47 8H49L53 4V17L49 13H47ZM56 8L61 13M61 8L56 13" />
    </svg>
    <div className="ml-[5px] flex w-[26px] flex-col items-center justify-center text-[11px] leading-[17px]"><span>فا</span><span>FA</span></div>
    <div className="ml-[7px] flex w-[64px] flex-col items-center justify-center whitespace-nowrap text-[11.500px] leading-[17px] tracking-[-0.300px]"><span dir="ltr">06:57 <bdi>ب.ظ</bdi></span><span dir="ltr">۱۳۹۹/۱۱/۱۴</span></div>
    <svg viewBox="0 0 16 16" className="ml-[11px] mr-[25px] size-4 self-center" fill="none" stroke="#fff"><path d="M.5 .5H15.500V12.500H10.500L8 15.500L5.500 12.500H.5Z" /></svg>
  </div>
);

export default function App() {
  return (
    <div className="relative h-[768px] w-[1366px] overflow-hidden font-['Open_Sans','Noto_Sans','DejaVu_Sans',sans-serif] text-[11.500px]">
      <Explorer />
      <CrypTool />
      <div className="absolute left-[1073px] top-[650px] z-20 text-[#7c879a]/60">
        <div className="text-[19px] leading-[24px]"><Fit w={157}>Activate Windows</Fit></div>
        <div className="text-[14px] leading-[21px]"><Fit w={236}>Go to Settings to activate Windows.</Fit></div>
      </div>
      <div className="absolute bottom-0 left-0 z-30 w-full"><Taskbar /></div>
    </div>
  );
}
